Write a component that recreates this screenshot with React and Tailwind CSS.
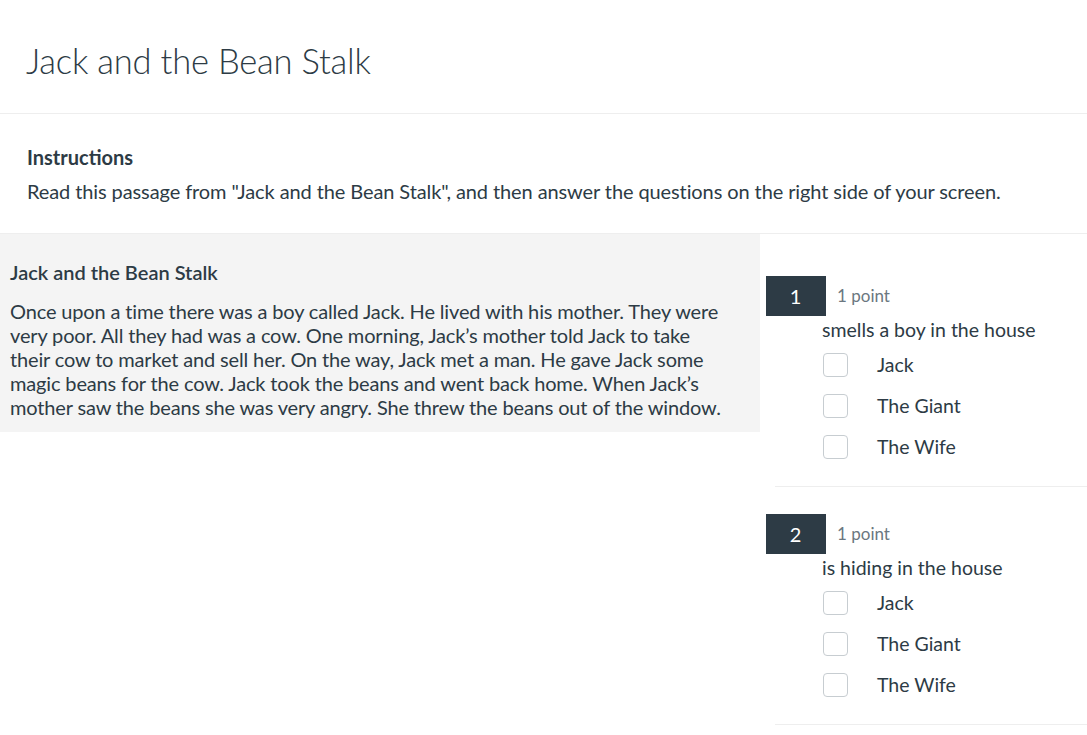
import React from 'react';

const questions = [
  { n: 1, text: 'smells a boy in the house' },
  { n: 2, text: 'is hiding in the house' },
];

const options = ['Jack', 'The Giant', 'The Wife'];

function Question({ n, text }) {
  return (
    <div className="ml-[15px] border-b border-[#eeeeee] pt-[27px] pb-[27px]">
      <div className="flex items-center -ml-[9px]">
        <div className="w-[60px] h-[40px] bg-[#2d3b45] text-white text-[20px] flex items-center justify-center pr-[1px]">{n}</div>
        <span className="ml-[11px] text-[17px] text-[#6b7780]">1 point</span>
      </div>
      <div className="pl-[47px] mt-[2px] text-[19.5px] leading-[24px]">{text}</div>
      <div className="pl-[48px] mt-[11px] flex flex-col gap-[17px]">
        {options.map((o) => (
          <label key={o} className="flex items-center h-[24px]">
            <span className="w-[25px] h-[24px] rounded-[4px] border border-[#c7cdd1] bg-white shrink-0"></span>
            <span className="ml-[29px] text-[19.5px]">{o}</span>
          </label>
        ))}
      </div>
    </div>
  );
}

export default function App() {
  return (
    <div className="min-h-screen bg-white text-[#2d3b45] font-['Lato','Open_Sans',sans-serif]">
      {/* Page title */}
      <div className="h-[114px] border-b border-[#eeeeee] px-[26px] pt-[39px]">
        <h1 className="text-[34.5px] font-light leading-[44px] tracking-[-0.2px]">Jack and the Bean Stalk</h1>
      </div>

      {/* Instructions */}
      <div className="h-[120px] border-b border-[#eeeeee] px-[27px] pt-[31px]">
        <div className="text-[20px] font-bold leading-[24px]">Instructions</div>
        <p className="mt-[10px] text-[20px] leading-[24px] tracking-[-0.1px]">Read this passage from "Jack and the Bean Stalk", and then answer the questions on the right side of your screen.</p>
      </div>

      <div className="flex">
        {/* Passage */}
        <div className="w-[760px] shrink-0 self-start bg-[#f4f4f4] px-[10px] pt-[26px] pb-[13px]">
          <h2 className="text-[20px] font-semibold leading-[24px]">Jack and the Bean Stalk</h2>
          <p className="mt-[15px] w-[716px] text-[20px] leading-[24px] tracking-[-0.15px]">
            Once upon a time there was a boy called Jack. He lived with his mother. They were very poor. All they had was a cow. One morning, Jack’s mother told Jack to take their cow to market and sell her. On the way, Jack met a man. He gave Jack some magic beans for the cow. Jack took the beans and went back home. When Jack’s mother saw the beans she was very angry. She threw the beans out of the window.
          </p>
        </div>

        {/* Questions */}
        <div className="flex-1 pt-[15px]">
          {questions.map((q) => (
            <Question key={q.n} {...q} />
          ))}
        </div>
      </div>
    </div>
  );
}
